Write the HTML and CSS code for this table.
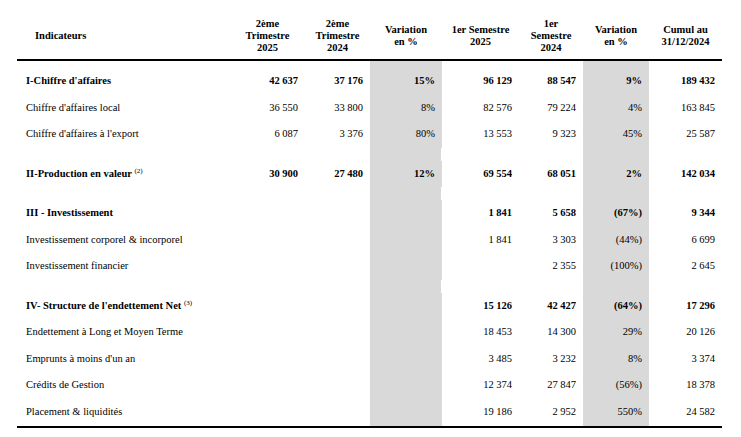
FILE: index.html
```html
<!DOCTYPE html>
<html lang="fr">
<head>
<meta charset="utf-8">
<title>Indicateurs</title>
<link rel="stylesheet" href="styles.css">
</head>
<body>
<table class="ind">
  <colgroup>
    <col class="c-lab"><col class="c-t25"><col class="c-t24"><col class="c-v1"><col class="c-s25"><col class="c-s24"><col class="c-v2"><col class="c-cum">
  </colgroup>
  <thead>
    <tr>
      <th class="lab">Indicateurs</th>
      <th>2ème<br>Trimestre<br>2025</th>
      <th>2ème<br>Trimestre<br>2024</th>
      <th>Variation<br>en %</th>
      <th>1er Semestre<br>2025</th>
      <th>1er<br>Semestre<br>2024</th>
      <th>Variation<br>en %</th>
      <th>Cumul au<br>31/12/2024</th>
    </tr>
  </thead>
  <tbody>
    <tr class="sp top"><td></td><td></td><td></td><td class="g"></td><td></td><td></td><td class="g"></td><td></td></tr>
    <tr class="b"><td class="lab">I-Chiffre d'affaires</td><td>42 637</td><td>37 176</td><td class="g">15%</td><td>96 129</td><td>88 547</td><td class="g">9%</td><td>189 432</td></tr>
    <tr><td class="lab">Chiffre d'affaires local</td><td>36 550</td><td>33 800</td><td class="g">8%</td><td>82 576</td><td>79 224</td><td class="g">4%</td><td>163 845</td></tr>
    <tr><td class="lab">Chiffre d'affaires à l'export</td><td>6 087</td><td>3 376</td><td class="g">80%</td><td>13 553</td><td>9 323</td><td class="g">45%</td><td>25 587</td></tr>
    <tr class="sp"><td></td><td></td><td></td><td class="g notch"></td><td></td><td></td><td class="g"></td><td></td></tr>
    <tr class="b"><td class="lab">II-Production en valeur <sup class="note">(2)</sup></td><td>30 900</td><td>27 480</td><td class="g">12%</td><td>69 554</td><td>68 051</td><td class="g">2%</td><td>142 034</td></tr>
    <tr class="sp"><td></td><td></td><td></td><td class="g notch"></td><td></td><td></td><td class="g"></td><td></td></tr>
    <tr class="b"><td class="lab">III - Investissement</td><td></td><td></td><td class="g"></td><td>1 841</td><td>5 658</td><td class="g">(67%)</td><td>9 344</td></tr>
    <tr><td class="lab">Investissement corporel &amp; incorporel</td><td></td><td></td><td class="g"></td><td>1 841</td><td>3 303</td><td class="g">(44%)</td><td>6 699</td></tr>
    <tr><td class="lab">Investissement financier</td><td></td><td></td><td class="g"></td><td></td><td>2 355</td><td class="g">(100%)</td><td>2 645</td></tr>
    <tr class="sp"><td></td><td></td><td></td><td class="g notch"></td><td></td><td></td><td class="g"></td><td></td></tr>
    <tr class="b"><td class="lab">IV- Structure de l'endettement Net <sup class="note">(3)</sup></td><td></td><td></td><td class="g"></td><td>15 126</td><td>42 427</td><td class="g">(64%)</td><td>17 296</td></tr>
    <tr><td class="lab">Endettement à Long et Moyen Terme</td><td></td><td></td><td class="g"></td><td>18 453</td><td>14 300</td><td class="g">29%</td><td>20 126</td></tr>
    <tr><td class="lab">Emprunts à moins d'un an</td><td></td><td></td><td class="g"></td><td>3 485</td><td>3 232</td><td class="g">8%</td><td>3 374</td></tr>
    <tr><td class="lab">Crédits de Gestion</td><td></td><td></td><td class="g"></td><td>12 374</td><td>27 847</td><td class="g">(56%)</td><td>18 378</td></tr>
    <tr class="last"><td class="lab">Placement &amp; liquidités</td><td></td><td></td><td class="g"></td><td>19 186</td><td>2 952</td><td class="g">550%</td><td>24 582</td></tr>
  </tbody>
</table>
</body>
</html>
```

FILE: styles.css
```css
html, body {
  margin: 0;
  padding: 0;
  background: #ffffff;
}

body {
  font-family: "Liberation Serif", "Times New Roman", serif;
  font-size: 10.5px;
  color: #000;
}

.ind {
  border-collapse: separate;
  border-spacing: 0;
  table-layout: fixed;
  width: 705px;
  margin: 12px 0 0 17px;
}

.c-lab { width: 213px; }
.c-t25 { width: 75px; }
.c-t24 { width: 65px; }
.c-v1  { width: 72px; }
.c-s25 { width: 77px; }
.c-s24 { width: 64px; }
.c-v2  { width: 66px; }
.c-cum { width: 73px; }

.ind th {
  font-weight: bold;
  text-align: center;
  vertical-align: middle;
  line-height: 12px;
  height: 47px;
  padding: 0;
  border-bottom: 2px solid #000;
}

.ind th.lab {
  text-align: left;
  padding-left: 18px;
}

.ind td {
  height: 26.5px;
  padding: 0 7px 0 0;
  text-align: right;
  vertical-align: middle;
  line-height: 12px;
  white-space: nowrap;
}

.ind td.lab {
  text-align: left;
  padding-left: 9px;
}

.ind tr.b td {
  font-weight: bold;
}

.ind tr.sp td {
  height: 13px;
}

.ind tr.sp.top td {
  height: 7px;
}

.ind tr.last td {
  height: 27px;
  border-bottom: 2px solid #000;
}

.ind td.g {
  background: #d9d9d9;
}

.ind td.notch {
  box-shadow: inset -1px 0 0 #ffffff;
}

.note {
  font-size: 7px;
  font-weight: normal;
  vertical-align: 4px;
  line-height: 0;
}
```
